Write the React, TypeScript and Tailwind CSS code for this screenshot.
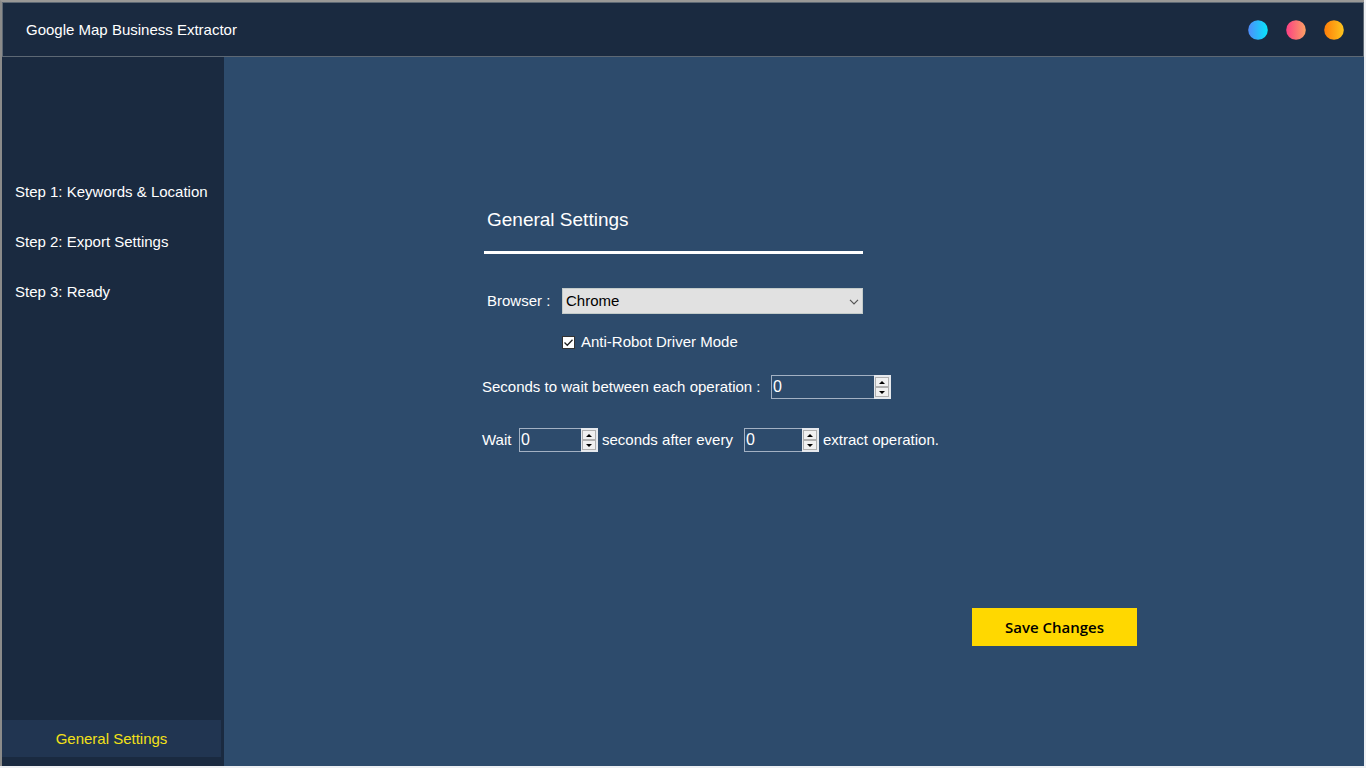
import { useState } from "react";

const steps = ["Step 1: Keywords & Location", "Step 2: Export Settings", "Step 3: Ready"];

const windowButtons = [
  { label: "Minimize", from: "#4f8cfb", to: "#06e6fb", id: "min" },
  { label: "Maximize", from: "#fc3f84", to: "#fba164", id: "max" },
  { label: "Close", from: "#fe7d09", to: "#fdc51e", id: "close" },
];

function Spinner({ id, label, className }: { id: string; label?: string; className: string }) {
  const [value, setValue] = useState(0);
  const stepButton =
    "flex h-[10px] w-[14px] items-center justify-center border border-[#b0b0b0] bg-[#f0f0f0]";
  return (
    <div className={`flex h-6 border border-[#a3b1c3] ${className}`}>
      <input
        id={id}
        type="number"
        min={0}
        aria-label={label}
        value={value}
        onChange={(e) => setValue(Number(e.target.value))}
        className="min-w-0 flex-1 appearance-none bg-transparent pl-px text-base leading-5 text-white outline-none [appearance:textfield] [&::-webkit-inner-spin-button]:appearance-none"
      />
      <div className="-m-px flex w-[17px] flex-col items-start justify-center bg-[#e6e9ed] pl-px">
        <button type="button" aria-label="Increase" className={stepButton} onClick={() => setValue(value + 1)}>
          <svg width="6" height="3" viewBox="0 0 6 3" aria-hidden="true">
            <path d="M0 3 3 0l3 3z" fill="#000" />
          </svg>
        </button>
        <button
          type="button"
          aria-label="Decrease"
          className={stepButton}
          onClick={() => setValue(Math.max(0, value - 1))}
        >
          <svg width="6" height="3" viewBox="0 0 6 3" aria-hidden="true">
            <path d="M0 0l3 3 3-3z" fill="#000" />
          </svg>
        </button>
      </div>
    </div>
  );
}

export default function App() {
  const [antiRobot, setAntiRobot] = useState(true);

  return (
    <div className="flex min-h-screen bg-[#eef0f3] pr-0.5 pb-0.5 font-['Liberation_Sans',Arial,sans-serif] text-[15px] leading-5 text-white">
      <div className="flex flex-1 flex-col border-t-2 border-l-2 border-t-[#999896] border-l-[#8b8b8a]">
        <header className="flex h-[55px] items-center justify-between border border-[#5d6874] bg-[#1a2a40] pr-[19px] pl-[23px]">
          <h1>Google Map Business Extractor</h1>
          <div className="flex items-center gap-[18px]">
            {windowButtons.map((b) => (
              <button key={b.id} type="button" aria-label={b.label}>
                <svg width="20" height="20" viewBox="0 0 20 20" className="block" aria-hidden="true">
                  <defs>
                    <linearGradient id={b.id}>
                      <stop stopColor={b.from} />
                      <stop offset="1" stopColor={b.to} />
                    </linearGradient>
                  </defs>
                  <circle cx="10" cy="10" r="9.8" fill={`url(#${b.id})`} />
                </svg>
              </button>
            ))}
          </div>
        </header>

        <div className="flex flex-1">
          <nav className="flex w-[222px] shrink-0 flex-col bg-[#1a2a40] pt-[125px] pb-[9px]">
            <ul className="flex flex-col gap-[30px] pl-[13px]">
              {steps.map((s) => (
                <li key={s}>
                  <a href="#">{s}</a>
                </li>
              ))}
            </ul>
            <a
              href="#"
              aria-current="page"
              className="mt-auto mr-[3px] flex h-[37px] items-center justify-center bg-[#213551] text-[#f2e018]"
            >
              General Settings
            </a>
          </nav>

          <main className="flex flex-1 flex-col bg-[#2d4b6c] pt-[151px] pl-[258px]">
            <h2 className="pl-[5px] text-[19px] leading-6">General Settings</h2>
            <hr className="mt-[19px] ml-0.5 w-[379px] border-0 border-t-[3px] border-white" />

            <div className="mt-[34px] flex items-center pl-[5px]">
              <label htmlFor="browser" className="w-[75px]">
                Browser :
              </label>
              <div className="relative w-[301px]">
                <select
                  id="browser"
                  defaultValue="Chrome"
                  className="block h-[26px] w-full appearance-none border border-[#c3cbc9] bg-[#e1e1e1] pl-[3px] text-[15px] text-black outline-none"
                >
                  <option>Chrome</option>
                  <option>Firefox</option>
                  <option>Edge</option>
                </select>
                <svg
                  width="10"
                  height="6"
                  viewBox="0 0 10 6"
                  fill="none"
                  stroke="#555"
                  strokeWidth="1.2"
                  className="pointer-events-none absolute top-[11px] right-1"
                  aria-hidden="true"
                >
                  <path d="M1 .8l4 4 4-4" />
                </svg>
              </div>
            </div>

            <label className="mt-[18px] flex items-center gap-1.5 pl-20">
              <span className="grid">
                <input
                  type="checkbox"
                  checked={antiRobot}
                  onChange={(e) => setAntiRobot(e.target.checked)}
                  className="peer col-start-1 row-start-1 h-[13px] w-[13px] appearance-none border border-[#333] bg-white"
                />
                <svg
                  width="13"
                  height="13"
                  viewBox="0 0 13 13"
                  fill="none"
                  stroke="#222"
                  strokeWidth="1.3"
                  className="pointer-events-none invisible col-start-1 row-start-1 peer-checked:visible"
                  aria-hidden="true"
                >
                  <path d="M2.5 6.5l2.8 2.8 5.2-5.6" />
                </svg>
              </span>
              Anti-Robot Driver Mode
            </label>

            <div className="mt-[23px] flex items-center">
              <label htmlFor="delay" className="w-[289px]">
                Seconds to wait between each operation :
              </label>
              <Spinner id="delay" className="w-[120px]" />
            </div>

            <div className="mt-[29px] flex items-center">
              <label htmlFor="pause" className="w-[37px]">
                Wait
              </label>
              <Spinner id="pause" className="w-[79px]" />
              <label htmlFor="every" className="w-[146px] pl-1">
                seconds after every
              </label>
              <Spinner id="every" className="w-[75px]" />
              <span className="pl-1">extract operation.</span>
            </div>

            <button
              type="button"
              className="mt-[156px] mr-[227px] h-[38px] w-[165px] self-end bg-[#ffd800] font-['Open_Sans',sans-serif] text-[15px] font-semibold text-black"
            >
              Save Changes
            </button>
          </main>
        </div>
      </div>
    </div>
  );
}
